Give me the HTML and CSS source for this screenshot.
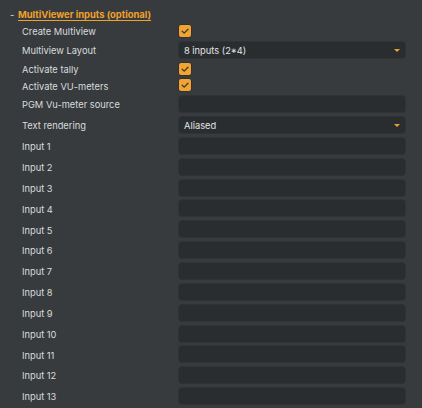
FILE: index.html
```html
<!DOCTYPE html>
<html>
<head>
<meta charset="utf-8">
<link rel="stylesheet" href="styles.css">
</head>
<body>
<div class="panel">
  <div class="heading"><span class="dash">-</span><span class="title">MultiViewer inputs (optional)</span></div>
  <div class="row short"><span class="label">Create Multiview</span><span class="cb"><svg viewBox="0 0 12 12" width="12" height="12"><path d="M3.2 6.2 L5.2 8.1 L9 4.2" fill="none" stroke="#3a3a36" stroke-width="1.3" stroke-linecap="round" stroke-linejoin="round"/></svg></span></div>
  <div class="row"><span class="label">Multiview Layout</span><div class="field select"><span>8 inputs (2*4)</span><span class="arrow"></span></div></div>
  <div class="row short"><span class="label">Activate tally</span><span class="cb"><svg viewBox="0 0 12 12" width="12" height="12"><path d="M3.2 6.2 L5.2 8.1 L9 4.2" fill="none" stroke="#3a3a36" stroke-width="1.3" stroke-linecap="round" stroke-linejoin="round"/></svg></span></div>
  <div class="row short"><span class="label">Activate VU-meters</span><span class="cb"><svg viewBox="0 0 12 12" width="12" height="12"><path d="M3.2 6.2 L5.2 8.1 L9 4.2" fill="none" stroke="#3a3a36" stroke-width="1.3" stroke-linecap="round" stroke-linejoin="round"/></svg></span></div>
  <div class="row"><span class="label">PGM Vu-meter source</span><div class="field"></div></div>
  <div class="row"><span class="label">Text rendering</span><div class="field select"><span>Aliased</span><span class="arrow"></span></div></div>
  <div class="row"><span class="label">Input 1</span><div class="field"></div></div>
  <div class="row"><span class="label">Input 2</span><div class="field"></div></div>
  <div class="row"><span class="label">Input 3</span><div class="field"></div></div>
  <div class="row"><span class="label">Input 4</span><div class="field"></div></div>
  <div class="row"><span class="label">Input 5</span><div class="field"></div></div>
  <div class="row"><span class="label">Input 6</span><div class="field"></div></div>
  <div class="row"><span class="label">Input 7</span><div class="field"></div></div>
  <div class="row"><span class="label">Input 8</span><div class="field"></div></div>
  <div class="row"><span class="label">Input 9</span><div class="field"></div></div>
  <div class="row"><span class="label">Input 10</span><div class="field"></div></div>
  <div class="row"><span class="label">Input 11</span><div class="field"></div></div>
  <div class="row"><span class="label">Input 12</span><div class="field"></div></div>
  <div class="row"><span class="label">Input 13</span><div class="field"></div></div>
</div>
</body>
</html>
```
FILE: styles.css
```css
html, body {
  margin: 0;
  padding: 0;
  background: #373b3e;
  height: 100%;
  overflow: hidden;
}
body {
  font-family: Inter, "Noto Sans", sans-serif;
  font-size: 9.3px;
  color: #dadcdd;
}
.panel {
  display: flex;
  flex-direction: column;
  gap: 2.85px;
  padding: 7px 16px 0 10px;
}
.heading {
  display: flex;
  align-items: center;
  height: 14px;
}
.dash {
  color: #b8babb;
  width: 8px;
  font-weight: 700;
}
.title {
  color: #f0a12a;
  font-weight: 700;
  font-size: 9.4px;
  text-decoration: underline;
  text-underline-offset: 2px;
}
.row {
  display: flex;
  align-items: center;
  height: 18px;
  padding-left: 12px;
}
.row.short {
  height: 14px;
}
.label {
  width: 156px;
  flex: none;
  padding-top: 1.5px;
}
.cb {
  width: 12px;
  height: 12px;
  margin-left: 1px;
  background: #f3a330;
  border-radius: 2px;
  display: flex;
  box-shadow: 0 0 0 0.5px #2a2c2d;
}
.field {
  flex: 1;
  height: 18px;
  box-sizing: border-box;
  background: #2a2d2f;
  border: 1px solid #303335;
  border-radius: 4px;
  display: flex;
  align-items: center;
  padding: 1px 5px 0;
  color: #e4e5e6;
}
.select span:first-child {
  flex: 1;
}
.arrow {
  width: 0;
  height: 0;
  border-left: 3px solid transparent;
  border-right: 3px solid transparent;
  border-top: 3.5px solid #f0a12a;
}
```
